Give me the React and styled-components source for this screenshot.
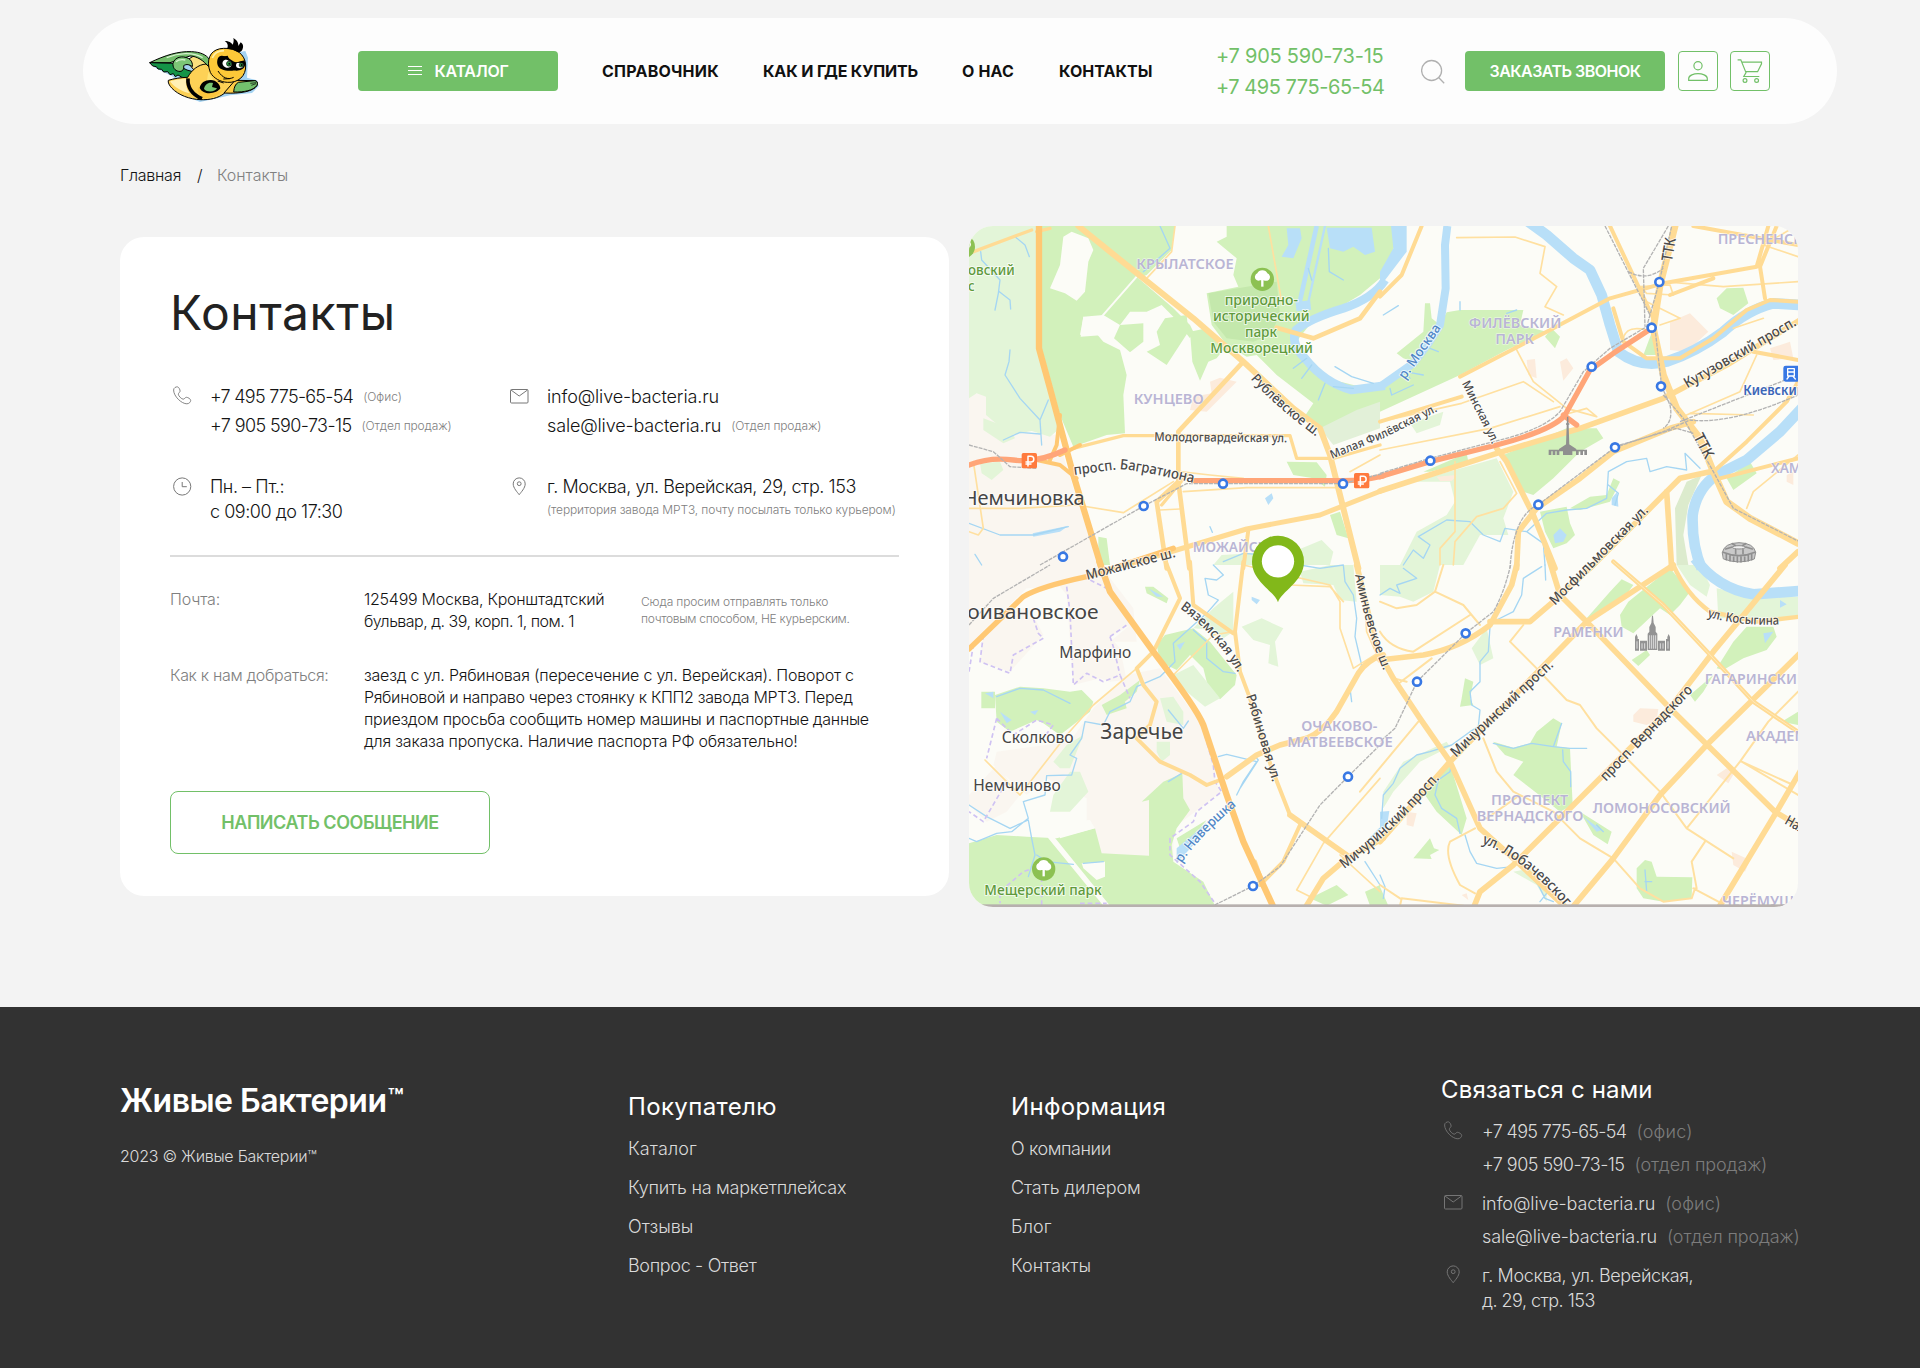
import React from "react";
import styled, { createGlobalStyle } from "styled-components";

const GlobalStyle = createGlobalStyle`
  *, *::before, *::after { box-sizing: border-box; }
  body {
    margin: 0;
    background: #f3f3f3;
    color: #141414;
    font-family: Inter, "Liberation Sans", sans-serif;
    font-size: 16px;
  }
  h1, h2, h3, p, ul { margin: 0; padding: 0; }
  ul { list-style: none; }
  a { color: inherit; text-decoration: none; }
  svg { display: block; }
`;

const GREEN = "#72c068";

const T = styled.span`
  letter-spacing: ${(p) => p.$ls || 0}px;
  white-space: nowrap;
`;

const Page = styled.div`
  width: 1920px;
  height: 1368px;
  overflow: hidden;
  padding-top: 18px;
  display: flex;
  flex-direction: column;
`;

/* ---------- header ---------- */

const Header = styled.header`
  flex: none;
  width: 1754px;
  height: 106px;
  margin-left: 83px;
  padding: 0 0 1px 66px;
  border-radius: 53px;
  background: #fdfdfd;
  display: grid;
  grid-template-columns: 209px 244px 614px 205px 44px 213px 52px 40px;
  align-items: center;
`;

const SolidButton = styled.button`
  width: 200px;
  height: 40px;
  border: 0;
  border-radius: 4px;
  padding: 0;
  background: ${GREEN};
  color: #fff;
  font: 600 16px/24px Inter, sans-serif;
  display: flex;
  align-items: center;
  justify-content: center;
  gap: 13px;
`;

const Nav = styled.nav`
  display: grid;
  grid-template-columns: 161px 199px 97px 1fr;
  font-weight: 650;
  line-height: 24px;
  color: #111;
`;

const Phones = styled.div`
  padding-top: 2px;
  display: flex;
  flex-direction: column;
  font-size: 20px;
  line-height: 31px;
  color: ${GREEN};
`;

const SquareButton = styled.button`
  width: 40px;
  height: 40px;
  padding: 0;
  border: 1px solid ${GREEN};
  border-radius: 4px;
  background: transparent;
  color: ${GREEN};
  display: grid;
  place-items: center;
`;

/* ---------- page body ---------- */

const Crumbs = styled.div`
  flex: none;
  margin: 39px 0 0 120px;
  height: 24px;
  line-height: 24px;
  font-weight: 350;
  display: grid;
  grid-template-columns: 77px 20px auto;
`;

const Muted = styled.span`
  color: ${(p) => p.$c || "#808080"};
  font-size: ${(p) => p.$size || 16}px;
  font-weight: 300;
`;

const Main = styled.main`
  flex: none;
  margin: 39px 0 0 120px;
  display: grid;
  grid-template-columns: 829px 829px;
  column-gap: 20px;
  align-items: center;
`;

const Card = styled.section`
  height: 659px;
  padding: 46px 50px 0;
  border-radius: 24px;
  background: #fff;
  display: flex;
  flex-direction: column;
  font-weight: 360;
`;

const Title = styled.h1`
  font-size: 48px;
  line-height: 60px;
  font-weight: 400;
  color: #222;
`;

const ContactGrid = styled.div`
  margin-top: 39px;
  display: grid;
  grid-template-columns: 337px 1fr;
  row-gap: 34px;
`;

const Contact = styled.div`
  display: grid;
  grid-template-columns: 40px 1fr;
  font-size: 18px;
  line-height: ${(p) => p.$lh || 29}px;
`;

const IconCell = styled.div`
  padding: ${(p) => p.$top || 3}px 0 0 3px;
  color: ${(p) => p.$c || "#777"};
`;

const Line = styled.div`
  display: flex;
  gap: 10px;
  white-space: nowrap;
`;

const NoteLine = styled(Line)`
  line-height: 21px;
`;

const Divider = styled.hr`
  width: 729px;
  height: 2px;
  margin: 31px 0;
  border: 0;
  background: #dcdcdc;
`;

const Detail = styled.div`
  display: grid;
  grid-template-columns: 194px 277px 1fr;
  line-height: 22px;
  & + & { margin-top: 32px; }
`;

const DetailWide = styled(Detail)`
  grid-template-columns: 194px 1fr;
`;

const Stack = styled.div`
  display: flex;
  flex-direction: column;
`;

const SmallNote = styled(Stack)`
  padding-top: 5px;
  font-size: 12px;
  line-height: 17px;
  color: #808080;
  font-weight: 300;
`;

const OutlineButton = styled.button`
  width: 320px;
  height: 63px;
  margin-top: 39px;
  border: 1px solid ${GREEN};
  border-radius: 8px;
  background: transparent;
  color: ${GREEN};
  font: 600 18px/24px Inter, sans-serif;
`;

const MapFrame = styled.div`
  width: 829px;
  height: 681px;
  border-radius: 24px;
  overflow: hidden;
`;

/* ---------- footer ---------- */

const Footer = styled.footer`
  flex: 1;
  margin-top: 100px;
  padding-left: 120px;
  background: #323232;
  color: #dadada;
  display: grid;
  grid-template-columns: 508px 383px 430px 1fr;
  align-items: start;
  font-size: 18px;
  font-weight: 325;
`;

const Brand = styled.div`
  padding-top: 74px;
`;

const BrandName = styled.h2`
  font-size: 32px;
  line-height: 40px;
  font-weight: 600;
  color: #fff;
  display: flex;
`;

const Mark = styled.span`
  margin-left: 1px;
  font-size: 26px;
  line-height: 34px;
`;

const Copyright = styled.p`
  margin-top: 23px;
  font-size: 16px;
  line-height: 24px;
`;

const LinkColumn = styled.div`
  padding-top: 84px;
`;

const Heading = styled.h3`
  font-size: 24px;
  line-height: 32px;
  font-weight: 400;
  color: #fff;
`;

const Links = styled.ul`
  margin-top: 14px;
  display: grid;
  row-gap: 15px;
  line-height: 24px;
`;

const Reach = styled.div`
  padding-top: 67px;
`;

const ReachRow = styled.div`
  display: grid;
  grid-template-columns: 41px 1fr;
  line-height: ${(p) => p.$lh || 33}px;
  margin-top: ${(p) => p.$mt}px;
`;

/* ---------- icons ---------- */

const PhoneIcon = () => (
  <svg width="19" height="19" viewBox="0 0 19 19" fill="none" stroke="currentColor" strokeWidth="0.9">
    <path d="M.6 4C.6 1.8 3 .6 4.6.9 6 1.3 7.1 3.8 7.1 5.1 7.1 6.4 5.3 6.9 5.3 8.2c0 1.700 3.400 5 4.900 5 1.300 0 1.900-1.900 3.200-1.900 1.500 0 4.300 1.700 4.300 3.100 0 1.500-1.600 3.400-3.800 3.400C8.600 17.900.6 10.300.6 4Z" />
  </svg>
);
const MailIcon = () => (
  <svg width="19" height="15" viewBox="0 0 19 15" fill="none" stroke="currentColor">
    <rect x=".5" y=".5" width="17.500" height="13.500" rx="1" />
    <path d="M1 1l8.200 6L17.500 1" />
  </svg>
);
const ClockIcon = () => (
  <svg width="19" height="19" viewBox="0 0 19 19" fill="none" stroke="currentColor">
    <circle cx="9.200" cy="9.500" r="8.600" />
    <path d="M9.200 5v4.700h4.600" />
  </svg>
);
const PinIcon = () => (
  <svg width="19" height="19" viewBox="0 0 19 19" fill="none" stroke="currentColor">
    <path d="M9.200 17.700C7.500 15.400 3.200 11 3.200 6.900a6 6 0 0 1 12 0c0 4.100-4.300 8.500-6 10.800Z" />
    <circle cx="9.200" cy="6.700" r="1.900" />
  </svg>
);
const SearchIcon = () => (
  <svg width="26" height="26" viewBox="0 0 26 26" fill="none" stroke="#b0b0b0" strokeWidth="1.300">
    <circle cx="10.600" cy="12.500" r="10" />
    <path d="M17.600 19.500l5.600 5.700" />
  </svg>
);
const MenuIcon = () => (
  <svg width="14" height="11" viewBox="0 0 14 11" stroke="#fff" strokeWidth="1">
    <path d="M0 1.500h14M0 5.500h14M0 9.500h14" />
  </svg>
);
const UserIcon = () => (
  <svg width="24" height="24" viewBox="0 0 24 24" fill="none" stroke="currentColor" strokeWidth="1.200">
    <circle cx="12" cy="6.800" r="4.100" />
    <path d="M2.700 21.400v-1.900c0-3.200 5.300-4.900 9.300-4.900s9.300 1.700 9.300 4.900v1.900Z" />
  </svg>
);
const CartIcon = () => (
  <svg width="26" height="26" viewBox="0 0 26 26" fill="none" stroke="currentColor" strokeWidth="1.200">
    <path d="M.6 1.800h3.200l5.200 12.800-2.200 3.900h15.500M4.700 4.200h19.800v1.600l-3.900 7.900H8.700" />
    <circle cx="8" cy="22.500" r="1.900" />
    <circle cx="19.600" cy="22.500" r="1.900" />
  </svg>
);

const Logo = () => (
  <svg width="110" height="65" viewBox="207 82 330 195" strokeLinejoin="round" overflow="visible">
    <path fill="#a4d3f2" d="M222 170l60 30-12 15 30 35 60 24 45-10 45-10 66-7 20-20-5-18-30-8 3-60-8-20Z" />
    <path fill="#f9df7c" stroke="#000" strokeWidth="3" d="M318 150l28-17 42 30-30 34Z" />
    <path fill="#73bd6b" stroke="#000" strokeWidth="3" d="M209 156C255 134 295 121 335 123c26 1 44 9 54 24l-3 22c-14-19-36-33-56-33l-60 20Z" />
    <path fill="#149447" stroke="#000" strokeWidth="3" d="M209 156l72 2 40 20 21 6c-2 14-18 19-36 16l-12-7-8 5-6-9-10 3-7-9-12 1-6-8-11-1-5-7-11-2Z" />
    <path fill="#7cc576" stroke="#000" strokeWidth="3" d="M279 158c5-19 28-24 46-15 9 4 14 16 12 25-8-6-17-9-26-3 2 11-4 19-15 17-12-2-18-12-17-24Z" />
    <path fill="none" stroke="#d7f0cf" strokeWidth="4" d="M260 141c35-14 77-18 108 0M288 153c7-6 17-7 28-5" />
    <path fill="#fdd156" stroke="#000" strokeWidth="3" d="M265 209c16-5 40-9 58-9 12-22 31-38 55-40l42 40 45 14-32 34c-19 15-44 20-72 19-32-1-66-14-85-34-8-8-13-18-11-24Z" />
    <path fill="#fff0b5" d="M270 212c15-5 34-8 48-8-2 17 2 33 11 44-24-6-46-18-59-36Z" />
    <path fill="#fcc63f" d="M354 230c20 18 45 20 75 8-10 14-29 23-57 25-14-10-21-20-18-33Z" />
    <path fill="none" stroke="#000" strokeWidth="11" d="M324 203c-2 25 10 47 42 61" />
    <path fill="#fdcb46" stroke="#000" strokeWidth="3" d="M432 247l33-38 60 1c8 1 9 10 5 16-10 15-47 24-98 21Z" />
    <path fill="#73c16d" stroke="#000" strokeWidth="3" d="M461 244c1-14 5-24 14-29l49-5c9 1 10 9 6 15-10 14-37 20-69 19Z" />
    <path fill="none" stroke="#000" strokeWidth="2" d="M511 218l18-2M514 224l14-5" />
    <path fill="#fdc838" stroke="#000" strokeWidth="3" d="M387 172c-7-35 10-58 44-59 38-2 64 18 66 50 2 34-23 54-55 52-20-1-42-12-51-30Z" />
    <path d="M434 91c14 0 20 5 24 11 3-7 4-13 2-20 9 5 16 13 15 24l7-11c8 5 9 14 5 22-3 6-8 9-15 7-9-6-19-8-31-9 5-10 2-18-7-24Z" />
    <path fill="none" stroke="#fff0a8" strokeWidth="5" d="M397 142c5-14 16-22 35-22" />
    <path fill="#ffe477" d="M385 184l18 27 12 24-38-2Z" />
    <path d="M412 160c-2-14 3-26 14-25 22 2 29 19 44 20 8 0 17-7 25-2 3 8-1 18-9 23-10 6-19 3-29 4-17 2-42-2-45-20Z" />
    <ellipse cx="441" cy="159" rx="14" ry="12" fill="#fff" transform="rotate(25 441 159)" />
    <ellipse cx="479" cy="164" rx="11" ry="9" fill="#fff" />
    <circle cx="447" cy="159" r="7.500" fill="#2f9b47" stroke="#000" strokeWidth="2" />
    <circle cx="484" cy="163" r="6.500" fill="#2f9b47" stroke="#000" strokeWidth="2" />
    <circle cx="448" cy="159" r="3" />
    <circle cx="485" cy="163" r="3" />
    <path d="M425 138l26 15-8-18ZM466 156l28-7v8Z" />
    <path fill="none" stroke="#000" strokeWidth="3" d="M414 181c14 22 31 27 47 19M430 205l20-1M413 211l18 6" />
    <path d="M359 232c2-16 18-25 34-24 16 1 27 12 28 25-7 14-49 25-62-1Z" />
    <path fill="#78c471" d="M372 235c2-14 14-22 27-18l-3 12 15 4c-4 9-27 15-39 2Z" />
  </svg>
);

/* ---------- map ---------- */

/* Each sheet is a quarter of the map; shapes are listed in that sheet's own coordinates. */
const SHEETS = { tl: [0, 0], tr: [1260, 0], bl: [0, 1050], br: [1260, 1050] };

const SUBURB = "#faf6f0";
const PARK = "#d2f1bb";
const PALE = "#e3f5d8";
const WATER = "#b8dff8";
const LAND = "#fcfcf7";
const BLOCK = "#fcebdc";

const areas = [
  ["tl", SUBURB, "M27 540L80 530L85 600L180 650L290 660L350 850L420 1050H27Z"],
  ["tl", PALE, "M27 33H237V400L300 640L270 665L215 648L150 660L78 600V545L50 535L27 550Z"],
  ["tl", PARK, "M245 33H645L635 105L560 180L535 190L640 280L690 330L700 350L690 370L640 305L605 270L560 290L510 290L480 330L430 300L370 305L360 360L400 345L430 380L480 405L500 480L490 540L495 655L440 660L340 695L300 600L245 400Z"],
  ["tl", LAND, "M310 65L335 50L385 70L400 105L385 140L375 230L350 257L315 235L270 220L300 150Z"],
  ["tl", LAND, "M370 305L405 312L400 345L432 345L432 360L362 365Z"],
  ["tl", PARK, "M480 330L550 325L550 380L510 412L462 370ZM590 350L615 310L680 300L685 350L620 450L560 410L600 390ZM690 350L740 340L800 390L770 430L745 440L720 497L697 440Z"],
  ["tl", PARK, "M800 33H1260V600L1190 590L1160 620L1080 640L1030 610L1060 565L950 480L890 420L860 425L800 390L755 330L740 235L835 215L820 180L830 130L770 80L800 65Z"],
  ["tl", "#c4e8ac", "M745 235L950 200L960 300L930 360L880 380L800 370L760 320Z"],
  ["tl", LAND, "M1005 385L1060 315L1150 270L1200 240L1260 190V520L1180 510L1100 490L1040 430Z"],
  ["tl", "#e2f0d8", "M1080 640L1190 585L1260 560V640L1120 690Z"],
  ["tl", PARK, "M980 740L1070 742L1100 780L1095 815L1060 790L1000 780ZM1110 900L1140 890L1165 970L1130 960ZM415 965L440 970L450 1050H415Z"],
  ["tl", PALE, "M70 610L150 640L165 670L130 685L70 645ZM60 745L120 740L130 765L95 795L65 775ZM1000 1010L1085 975L1120 1010L1110 1050H1000ZM785 1020L880 1015V1050H760Z"],
  ["tl", BLOCK, "M750 500L780 488L830 500L740 590L690 585L700 545L755 535Z"],
  ["tl", WATER, "M980 40H1020L1025 70L1000 130L965 125L985 90ZM1100 38H1235L1245 110L1215 120L1180 95L1150 110L1110 100ZM915 850L935 835L940 850L925 870ZM218 955L325 932L300 950L220 965Z"],
  ["tr", PARK, "M0 33H35L50 80L0 190ZM240 285H430L420 330L500 350L380 405L240 480L0 590V520L100 440L180 330L200 292ZM50 415L130 350L135 265L150 265L155 310L180 330L100 440L70 430ZM495 365L515 340L540 365L525 400Z"],
  ["tr", PARK, "M370 720L560 640L650 640L670 670L600 710L520 790L460 840L430 830ZM480 890L560 875L570 925L585 960L560 985L520 1000L495 950ZM570 880L630 845L680 840L700 790L720 800L690 860L600 885ZM1010 250L1040 220L1090 218L1105 265L1060 300L1020 280ZM130 770L260 715L265 740L150 770ZM1040 790L1110 740L1130 775L1060 825ZM790 420L820 340L830 420Z"],
  ["tr", PALE, "M100 800L350 730L400 830L370 910L385 960L300 960L250 1050H60L110 950L200 900L225 860L210 800ZM90 625L190 590L180 630L110 655Z"],
  ["tr", "#dcebcd", "M920 800L965 780L925 870L910 960L925 1050H890L885 880Z"],
  ["tr", BLOCK, "M870 320L930 295L985 350L920 410L870 405ZM540 440L560 430L580 460L550 497ZM440 435L465 432L470 490L445 480ZM170 785L230 780L215 798L180 798ZM1170 400L1230 380L1240 430L1180 435ZM1220 780L1240 770V810L1220 800Z"],
  ["tr", WATER, "M33 33H80V110L0 215V170L40 100ZM520 960L540 940L560 960L550 980L525 985ZM695 850L712 830L715 875L695 870Z"],
  ["bl", SUBURB, "M27 0H420L520 130L530 230L450 230L510 180L450 215L480 250L500 345L450 350L420 340L340 360L320 90L300 65L200 70L100 170L60 230L27 240ZM500 330L600 310L720 470L765 600L765 650L785 680L640 790L640 1022H380V700L260 640L200 690L100 600L110 560L330 530L400 430ZM27 690L110 600L180 690L140 740L80 770L27 720ZM210 130L250 210L150 320L60 290L70 210L130 130Z"],
  ["bl", PARK, "M105 390L180 365L250 370L330 380L365 375L400 410L390 440L300 510L250 475L230 465L150 500L110 470ZM64 380H105V430H64ZM27 835L110 810L200 815L290 820L405 790L425 865L567 872V705L545 710L610 650L667 625L670 700L690 735L650 790L635 840L640 890L730 950L765 1022H27Z"],
  ["bl", PARK, "M615 210L700 190L750 230L830 330L825 360L780 403L745 370L730 310L690 270L650 315L600 290L590 240ZM555 65L580 65L625 100L620 115L560 85ZM425 420L480 390L540 345L530 380L495 410L500 430L440 450ZM650 820L740 765L720 790L660 850Z"],
  ["bl", PALE, "M845 185L905 160L970 190L945 230L955 305L925 295L930 240L880 225ZM700 190L760 130L820 80L820 200L790 220L760 195ZM640 330L700 300L780 400L735 425L680 380ZM600 400L640 395L670 440L670 480L620 470ZM280 690L330 620L360 620L385 680L330 740L270 740ZM590 530L630 530L630 570L605 590L590 560ZM1020 20L1110 0H1180L1190 110L1140 105L1120 60L1030 55ZM280 590L320 540L370 510L350 560L330 610L300 610Z"],
  ["bl", LAND, "M205 720L450 1022H430L200 740ZM365 895L435 890V935L410 945L370 910ZM300 770L390 765L405 790L300 820Z"],
  ["bl", WATER, "M875 95L900 105L890 118L875 105ZM650 240L675 230L660 255ZM650 850L710 800L740 770L700 840L650 895ZM120 440L155 465L140 475ZM75 385L100 380V400ZM210 440L235 435L225 450ZM565 70L610 95L590 95Z"],
  ["bl", PARK, "M1215 980L1260 960V1022H1230ZM1050 1000L1130 960L1165 990L1100 1022Z"],
  ["br", PARK, "M400 630L430 590L375 570L340 530L400 548L450 535L570 550L578 720L540 740L490 700ZM450 535L470 500L520 460L545 475L530 545ZM1010 310L1060 230L1100 185L1180 185L1190 215L1160 255L1090 280L1030 315ZM720 150L745 110L870 10L930 80L900 120L870 150L840 130L760 205L725 185ZM620 160L690 80L725 43L760 60L745 80L620 165ZM770 910L795 885L815 890L830 935L937 937L935 1000L850 1010L790 1000L770 970ZM100 880L150 820L162 850L178 855L150 870L155 882ZM135 690L210 590L220 630L260 760L245 810L170 740ZM600 740L695 800L683 838L640 810ZM755 285L800 255L810 270L775 303ZM930 390L1000 330L970 380L945 410ZM245 400L255 340L280 350L270 400L280 420L240 425ZM1205 470L1254 440V480ZM0 965L25 1022H0Z"],
  ["br", PALE, "M1010 70L1130 95L1254 95V160H1015ZM0 0H180L160 80L100 110L60 95L0 90ZM890 0H960L990 60L980 95L930 60ZM275 250L320 190L340 280L300 300ZM10 680L70 590L200 530L210 545L120 590L40 680L10 730ZM400 920L450 910L500 960V1010L470 960Z"],
  ["br", BLOCK, "M760 450L780 430L835 432L830 465L800 480L760 470ZM1010 630L1040 610L1065 620L1045 655ZM1055 860L1110 885L1095 920L1060 900ZM80 740L110 745L100 785L80 780ZM245 990L260 985L265 1005Z"],
  ["br", WATER, "M1150 205L1180 200L1155 235ZM1200 105L1220 118L1200 128ZM610 755L665 795L650 800ZM0 740L28 738L20 790H0Z"],
];

/* [sheet, width, path] */
const rivers = [
  ["tl", 14, "M1070 33L1015 280"], ["tl", 7, "M1095 33L1042 275"], ["tl", 28, "M1008 275L1052 270"],
  ["tl", 26, "M1275 195Q1240 250 1150 280Q1050 310 1008 345Q990 385 1035 430Q1095 505 1175 525L1275 512"],
  ["tr", 24, "M202 33L195 90L197 220L180 330L145 385L100 445L0 515"],
  ["tr", 32, "M445 20L500 60L580 130L630 165L665 240L690 330L715 410Q780 460 860 440Q950 410 1030 350Q1100 285 1180 265L1260 270"],
  ["tr", 32, "M1270 575L1200 650L1100 735L1010 780Q950 820 938 900Q935 990 965 1060"],
  ["br", 32, "M945 -20Q1010 70 1120 88L1260 78"],
];

const streams = [
  ["tl", "M165 65L195 90L208 125M62 110L65 135L120 195L115 235L105 285M118 230L150 255L152 282M150 405L147 440L135 480L180 550L240 615L265 555M240 615L245 690M130 675L180 652L240 657M600 33L630 100L590 135L550 170M1105 100L1108 170L1150 195M1045 160L1055 195M1000 460L1040 430M1025 490L1055 450M1075 555L1095 505M1120 515L1180 520M1125 455L1175 485L1240 505M27 925L120 960L220 960L325 935M750 935L757 952M45 1018L65 1050M790 1040L850 1015L920 1020"],
  ["tr", "M10 300L55 272M30 520L35 540L100 510M90 490L75 470L130 480M150 400L175 410M240 285L240 260M380 295L410 285M70 1050L100 1005L130 1030L150 990L115 965L200 915L270 920L310 960L360 980L375 940L440 950L500 895L560 885L620 880L680 850L685 770L740 740L800 730L810 770L860 755L920 765L915 715L960 760M685 810L715 835L705 870M440 950L490 985L495 1050"],
  ["bl", "M760 0L790 30L770 45L735 40L745 90L775 105L740 145L690 190L640 235L645 290L600 335L530 365L510 410L450 440L430 480L375 470L365 520L330 570L350 580L335 630L260 632L255 690L190 710L205 760L155 800L110 805L50 830L27 820M27 720L80 755L150 790L205 765L215 820L225 870L205 935M230 870L260 890L340 898M370 895L430 890M110 395L180 370L250 375L330 415M700 195L740 230L740 280L790 320L825 325M1020 0L1080 10L1150 0L1155 50L1180 90L1190 160L1185 215L1205 300L1170 370L1175 410M775 575L800 568L890 590L850 650L830 690M890 580L895 585L840 670M625 650L665 625M1260 790L1220 830M625 435L670 490L685 468M1215 890L1260 960"],
  ["br", "M0 90L30 70L60 85L50 60L110 40L70 10M495 0L497 45M485 5L430 40L425 90L400 140L350 165L330 185L325 260L300 290L300 350L270 380L275 420L300 435L295 485L270 500L215 540L150 560L110 570L60 610L40 655L10 690L5 760M340 535L400 550L455 535L520 545L545 475M520 545L570 550L620 550M548 555L550 590L572 620L572 665M215 590L210 620L175 645L165 690L185 730L230 760L240 805M255 810L270 860L290 895L350 910L400 905M450 930L475 960L495 1000L520 1010M0 930L15 965L10 1000M795 915L800 980M795 950L815 950M650 780L670 800M500 985L480 1010"],
];

const MINOR = "#ffe0a0";
const MAJOR = "#ffdb94";
const BELT = "#ffc873";
const TOLL = "#ffa578";

/* [sheet, colour, width, path] */
const roads = [
  ["tl", MINOR, 5, "M27 880L180 880L350 870L490 893L560 850L640 800M645 33L635 110L560 190M925 33L965 260M40 740L70 940L55 960L27 950M600 885L660 882M670 830L860 818L1140 818M660 770L750 780L850 790M1170 770L1260 720"],
  ["tr", MINOR, 5, "M230 68L405 66L495 95L480 175L530 215L495 275L550 300M405 395L460 500L560 580L650 605M0 620L245 565L430 500L520 560M0 705L330 640L540 575M225 740V950L180 1000V1050M220 1050L225 980L290 905L370 880L410 835M360 740L410 835M550 600L620 580L650 605M1254 30L1150 90L1254 125M850 200L1030 215L1254 200M1120 600L930 595M1130 420L1080 530L920 600M1100 880L1120 830L1254 720M780 215L870 210L880 240L800 235ZM730 370Q740 330 800 345M1150 310L1060 340M800 260L900 310L840 330"],
  ["bl", MINOR, 5, "M530 310L400 420L320 510L180 690L75 585M850 0L1110 60L1140 110L1140 190L1180 310L1260 260M640 330L760 210L820 200M1090 835L1260 640M1090 835L1010 975L1060 1000M1140 870L1260 980M990 60L1110 65L1150 110M1215 130L1220 200L1260 290"],
  ["br", MINOR, 6, "M430 180L390 230L470 310L560 405L600 420L650 490L720 560L840 680L920 790L1060 880M310 520L350 620L400 680L520 740L600 820L700 880L780 970L850 1010L935 1000L945 970M0 110L50 130L110 120L165 80L190 0M165 80L250 120L300 180M0 200Q30 250 100 260L270 150M50 360L155 280M-60 680L115 470M285 790L210 830Q190 870 240 960L285 985M60 1000L0 960M60 1022L65 1000L250 1022M940 970L1015 1010M975 830L935 890L950 970M1085 590L1240 660M1165 470L1080 590L920 790M1254 380L1165 470M1085 590L1254 690M40 340L80 350M320 760L420 690"],
  ["tl", MAJOR, 10, "M27 115L215 45M340 700L490 662H990L1010 730L1120 730L1260 690M605 870L680 780M230 50L270 40"],
  ["tl", MAJOR, 14, "M950 338L1060 370L1200 310L1260 230M850 440L655 650V800M655 800L590 860L620 1060M655 800L688 1060"],
  ["tl", MAJOR, 12, "M865 945L850 1060"],
  ["tl", MAJOR, 18, "M355 33L450 110L700 310L850 440L1000 580L1080 640L1110 720L1150 880L1195 1060"],
  ["tl", MAJOR, 15, "M500 1050L650 1005L860 942L1080 900L1270 825"],
  ["tr", MAJOR, 12, "M0 245L65 180L125 33M0 620L245 545M240 485L500 350L690 250L850 205L1130 155L1165 33M1190 33L1140 155L1155 250M870 240L1000 190M700 280L730 380L800 430L900 430L1000 370L1100 285L1170 255L1254 260M690 33L820 310M1000 770L1100 680L1220 560L1254 500M1120 410L1254 435M1020 790L1254 730M940 33L1254 90"],
  ["tr", MAJOR, 17, "M0 828L350 715L600 640L850 550L1040 450L1260 315M350 700L380 740L460 900L525 1060M870 640L700 710L600 790L470 880L415 950L410 1060M990 770L900 790L800 890L630 1060M860 830L875 1060M1254 1010L1200 1060M870 640L940 620"],
  ["tr", MAJOR, 21, "M885 33L840 210L820 340L850 480L890 580L960 670L1000 770L1040 860L1110 910L1254 985"],
  ["bl", MAJOR, 12, "M617 -10L660 100L580 260L530 310L550 360L590 410L570 480L530 520L600 590L690 630L740 660L780 645M690 -10L700 120L820 205M850 -10L825 200L840 320L870 400L935 610L990 750L1160 870M1020 780L970 890L900 960M885 890L910 960"],
  ["bl", MAJOR, 17, "M1270 270Q1220 285 1195 325L1130 440Q1090 500 1040 520L960 540L890 570L800 635M1035 1030L1090 940L1160 880L1270 820M990 750L1160 870"],
  ["br", MAJOR, 17, "M-70 0L-10 250L40 340L120 460L210 590L300 790L400 880L560 1030M410 0L395 60L330 180Q240 250 130 270L0 285M640 0L520 110L450 170L330 170M500 -40L540 90L620 170L870 430L1185 740L1260 785M0 830L210 590L620 170L880 0M280 1030L300 980L400 900L560 740L870 430L1000 260L1215 0M575 1030L700 880L840 690L980 540L1260 265M1015 1030L1190 740L1260 620"],
  ["br", MAJOR, 13, "M880 0Q920 90 990 140L1130 170L1260 155M700 -10L850 120L1000 280L1120 410L1260 505"],
  ["br", "#fff0cc", 2, "M700 -10L850 120L1000 280L1120 410L1260 505"],
  ["tl", BELT, 19, "M237 33V400L270 520L340 780L425 1060"],
  ["tl", BELT, 12, "M300 600L290 690L270 735M350 790L300 750L230 735M360 690L300 720"],
  ["bl", BELT, 19, "M418 -10L450 80L580 260Q710 430 730 480Q770 600 800 690L850 830L942 1030"],
  ["bl", BELT, 16, "M27 252L190 95Q240 65 380 35L640 -50"],
  ["tl", TOLL, 16, "M27 750Q90 725 160 735T315 705M700 797H1150Q1210 797 1270 783"],
  ["tr", TOLL, 16, "M0 785L150 740L350 690Q520 645 555 600L630 465L700 415L815 340M550 600L590 630"],
];

const rails = [
  ["tl", "M240 1050L551 873L680 806H1150L1270 775M27 690L100 710L150 755L230 760"],
  ["tr", "M0 775L150 730L340 680Q490 645 540 590L610 470L690 400L800 335L838 201L875 33M475 869L705 697L850 650L930 615Q1050 630 1254 540M720 690L890 640L940 655M845 514L825 340M845 514L870 570Q880 620 850 640M850 540L910 610L1000 770L1060 880L1254 978M475 869Q400 900 390 1060M675 33L810 300M865 33L790 160L795 335M745 170Q800 200 850 160M900 620L1254 480"],
  ["bl", "M27 180L100 100L270 0M1270 530L1164 635L1080 720L960 905L879 963L760 1022"],
  ["br", "M392 0Q370 90 340 140L257 205L111 350L45 490L0 530"],
];

const borders = [
  ["bl", "M70 210L60 290L150 325L160 270L250 220L235 205L210 130M320 65L330 140L340 360L380 325L430 350L480 330L510 400M450 215L500 180M450 215L460 245L480 330M110 460L80 580M140 650L70 770L27 740M110 460L160 510L230 465L280 480L250 520M640 330L720 460L760 600L765 650L785 680L710 740L700 770L630 820V870L720 950L765 1015M245 1020V900L190 920L120 980V1015M360 1015H440M27 320L40 240M370 35L440 70"],
];

const stations = [
  ["tl", 789, 806], ["tl", 1149, 806], ["tl", 551, 873], ["tl", 309, 1025],
  ["tr", 838, 201], ["tr", 815, 338], ["tr", 635, 455], ["tr", 843, 514], ["tr", 151, 737], ["tr", 705, 697], ["tr", 475, 869],
  ["bl", 1164, 635], ["bl", 879, 963], ["br", 257, 205], ["br", 111, 350],
];

/* [sheet, x, baseline, size, length, kind, text] */
const places = [
  ["tl", 529, 163, 43, 292, "district", "КРЫЛАТСКОЕ"],
  ["tl", 521, 566, 43, 210, "district", "КУНЦЕВО"],
  ["tl", 698, 1011, 43, 222, "district", "МОЖАЙСК"],
  ["tr", 266, 339, 43, 278, "district", "ФИЛЁВСКИЙ"],
  ["tr", 346, 387, 43, 116, "district", "ПАРК"],
  ["tr", 1013, 87, 43, 255, "district", "ПРЕСНЕНСК"],
  ["tr", 1173, 773, 43, 150, "district", "ХАМОВ"],
  ["bl", 1024, 498, 43, 228, "district", "ОЧАКОВО-"],
  ["bl", 982, 545, 43, 316, "district", "МАТВЕЕВСКОЕ"],
  ["br", 520, 215, 43, 211, "district", "РАМЕНКИ"],
  ["br", 974, 356, 43, 310, "district", "ГАГАРИНСКИЙ"],
  ["br", 1098, 529, 43, 220, "district", "АКАДЕМИ"],
  ["br", 333, 720, 43, 232, "district", "ПРОСПЕКТ"],
  ["br", 290, 768, 43, 320, "district", "ВЕРНАДСКОГО"],
  ["br", 638, 744, 43, 414, "district", "ЛОМОНОСОВСКИЙ"],
  ["br", 1026, 1024, 43, 245, "district", "ЧЕРЁМУШК"],
  ["tl", 794, 269, 42, 220, "park", "природно-"],
  ["tl", 759, 317, 42, 290, "park", "исторический"],
  ["tl", 855, 365, 42, 96, "park", "парк"],
  ["tl", 751, 413, 42, 308, "park", "Москворецкий"],
  ["tl", 24, 179, 42, 140, "park", "овский"],
  ["tl", 24, 227, 42, 20, "park", "с"],
  ["bl", 73, 991, 42, 352, "park", "Мещерский парк"],
  ["tl", 8, 871, 62, 366, "town", "Немчиновка"],
  ["bl", 22, 161, 62, 394, "town", "оивановское"],
  ["bl", 421, 521, 64, 249, "town", "Заречье"],
  ["bl", 298, 278, 48, 216, "town", "Марфино"],
  ["bl", 125, 534, 48, 216, "town", "Сколково"],
  ["bl", 40, 679, 48, 262, "town", "Немчиново"],
  ["tr", 1090, 541, 44, 185, "station", "Киевский"],
];

/* [sheet, path, size, length, kind, text] */
const streets = [
  ["tl", "M583 678L985 682", 37, 398, "street", "Молодогвардейская ул."],
  ["tl", "M343 780L480 762Q560 770 705 805", 43, 362, "street", "просп. Багратиона"],
  ["tl", "M872 492Q940 570 1078 672", 40, 262, "street", "Рублёвское ш."],
  ["tl", "M1116 732L1270 670L1440 585", 36, 348, "street", "Малая Филёвская ул."],
  ["tl", "M382 1095L650 1025", 42, 275, "street", "Можайское ш."],
  ["tr", "M245 505Q290 590 335 685", 36, 205, "street", "Минская ул."],
  ["tr", "M922 520L1260 325", 43, 380, "street", "Кутузовский просп."],
  ["tr", "M876 140L888 70", 46, 70, "street", "ТТК"],
  ["tr", "M940 665L978 738", 46, 78, "street", "ТТК"],
  ["tr", "M75 495L190 330", 40, 190, "river", "р. Москва"],
  ["tr", "M525 1172L810 885", 41, 400, "street", "Мосфильмовская ул."],
  ["bl", "M660 130Q760 200 835 325", 40, 262, "street", "Вяземская ул."],
  ["bl", "M858 392L940 660", 40, 272, "street", "Рябиновая ул."],
  ["bl", "M1185 30Q1220 200 1272 320", 38, 300, "street", "Аминьевское ш."],
  ["bl", "M665 895Q720 810 850 705", 40, 240, "river", "р. Навершка"],
  ["bl", "M1153 912Q1290 810 1440 640", 43, 395, "street", "Мичуринский просп."],
  ["br", "M228 578L525 300", 43, 403, "street", "Мичуринский просп."],
  ["br", "M678 650L942 375", 43, 378, "street", "просп. Вернадского"],
  ["br", "M982 155Q1080 185 1202 178", 38, 218, "street", "ул. Косыгина"],
  ["br", "M305 835Q430 880 555 1025", 43, 318, "street", "ул. Лобачевског"],
  ["br", "M1212 775L1270 808", 42, 62, "street", "Нах"],
];

const MapSvg = styled.svg`
  font-family: "Noto Sans", "Open Sans", sans-serif;
  stroke-linecap: round;
  stroke-linejoin: round;
`;

const KIND = {
  district: ["#b9b5d4", 600],
  park: ["#5f9a3c", 500],
  town: ["#454545", 400],
  station: ["#3a66b8", 600],
  street: ["#4a4a4a", 500],
  river: ["#4f86c6", 500],
};

const Label = styled.text`
  fill: ${(p) => KIND[p.$kind][0]};
  font-weight: ${(p) => KIND[p.$kind][1]};
  font-size: ${(p) => p.$size}px;
  stroke: #fff;
  stroke-opacity: 0.7;
  stroke-width: ${(p) => (p.$kind === "district" ? 3 : 6)}px;
  paint-order: stroke;
`;

const shift = (q) => `translate(${SHEETS[q][0]} ${SHEETS[q][1]})`;

const Tree = ({ x, y }) => (
  <g transform={`translate(${x} ${y})`}>
    <circle r="35" fill="#8cc152" />
    <path d="M-20 0a12 12 0 0 1 5-18a16 14 0 0 1 30 0a12 12 0 0 1 5 19q-8 6-16 2h-10q-9 3-14-3Z" fill="#fff" />
    <path d="M0 0V22" stroke="#fff" strokeWidth="7" strokeLinecap="butt" />
  </g>
);

const TollSign = ({ x, y }) => (
  <g transform={`translate(${x} ${y})`}>
    <rect x="-23" y="-23" width="46" height="46" rx="5" fill="#ff7a3d" />
    <path d="M-4 16V-13H5a8 8 0 0 1 0 17H-10M-10 10H5" fill="none" stroke="#fff" strokeWidth="4.500" />
  </g>
);

const CityMap = () => (
  <MapSvg width="829" height="681" viewBox="27 33 2487 2043">
    <rect x="27" y="33" width="2487" height="2043" fill={LAND} />
    {areas.map(([q, c, d], i) => <path key={i} transform={shift(q)} fill={c} d={d} />)}
    {rivers.map(([q, w, d], i) => <path key={i} transform={shift(q)} fill="none" stroke={WATER} strokeWidth={w} strokeLinecap="butt" d={d} />)}
    {streams.map(([q, d], i) => <path key={i} transform={shift(q)} fill="none" stroke="#a5d6f3" strokeWidth="4" d={d} />)}
    {borders.map(([q, d], i) => <path key={i} transform={shift(q)} fill="none" stroke="#cfc2f2" strokeWidth="5" strokeDasharray="14 9" strokeLinecap="butt" d={d} />)}
    <path d="M425 305L530 185" stroke={LAND} strokeWidth="6" />
    {roads.map(([q, c, w, d], i) => (
      <path key={i} transform={shift(q)} fill="none" d={d} stroke={c} strokeWidth={w} />
    ))}
    {rails.map(([q, d], i) => (
      <path key={i} transform={shift(q)} fill="none" strokeLinecap="butt" d={d} stroke="#b3b3b3" strokeWidth="4" strokeDasharray="12 3" />
    ))}
    {stations.map(([q, x, y], i) => (
      <circle key={i} transform={shift(q)} cx={x} cy={y} r="12" fill="#fff" stroke="#3878e4" strokeWidth="8" />
    ))}
    <TollSign x="208" y="737" />
    <TollSign x="1205" y="797" />
    <Tree x="907" y="193" />
    <Tree x="251" y="1962" />
    <Tree x="10" y="95" />

    <g transform="translate(1823 605)" fill="#8f8f8f">
      <path d="M-2 0H2L5 85H-5ZM-5 20H5V24H-5ZM-57 99H58V104H-57ZM-57 104H-49V115H-57ZM-45 104H-37V115H-45ZM-33 104H-25V115H-33ZM25 104H33V115H25ZM38 104H46V115H38ZM50 104H58V115H50ZM-26 97L0 80L26 97V100H-26ZM-14 100H14V115H-14Z" />
    </g>
    <g transform="translate(2337 1012)" fill="none" stroke="#8f8f8f" strokeWidth="5">
      <path d="M-50 0Q-44 -28 0 -29Q44 -28 50 0L46 20Q0 38 -46 20Z" fill="#c9c9c9" strokeWidth="3" />
      <path d="M-48 0Q0 20 48 0M-38 4V22M-27 7V25M-16 9V27M-5 10V29M6 10V29M17 9V27M28 7V25M38 4V22" />
      <path d="M-40 -10L-20 -16M40 -10L20 -16M-20 -26L-10 -20M20 -26L10 -20M-10 -8V4M12 -8V4" />
      <ellipse cx="0" cy="-15" rx="20" ry="5" fill="#eee" strokeWidth="3" />
    </g>
    <g transform="translate(2078 1202)" fill="#939393">
      <path d="M-2 0H1L3 22L9 34V48L14 54V103H-15V54L-10 48V34L-4 22ZM-53 64L-49 55L-45 64V70H-41V105H-53ZM44 64L48 55L52 64V105H40V70H44ZM-38 75H-17V105H-38ZM16 75H37V105H16Z" />
      <path d="M-9 60V98M-3 60V98M3 60V98M9 60V98M-32 84V98M-24 84V98M23 84V98M31 84V98M-47 78V98M46 78V98" stroke="#eee" strokeWidth="2.500" />
    </g>
    <g transform="translate(2470 452)">
      <rect width="48" height="48" rx="7" fill="#3878e4" />
      <path d="M13 9H33V31H13ZM14 19H32M17 32L11 40M29 32L36 40" stroke="#fff" strokeWidth="4" fill="none" />
    </g>

    {places.map(([q, x, y, size, len, kind, text], i) => (
      <Label key={i} transform={shift(q)} x={x} y={y} $size={size} $kind={kind} textLength={len} lengthAdjust="spacingAndGlyphs">{text}</Label>
    ))}
    {streets.map(([q, d, size, len, kind, text], i) => (
      <g key={i} transform={shift(q)}>
        <path id={`street-${i}`} d={d} fill="none" />
        <Label $size={size} $kind={kind}>
          <textPath href={`#street-${i}`} textLength={len} lengthAdjust="spacingAndGlyphs">{text}</textPath>
        </Label>
      </g>
    ))}

    <path fill="#82b81a" d="M954 1162C946 1130 876 1100 876 1040A78 78 0 1 1 1032 1040C1032 1100 962 1130 954 1162Z" />
    <circle cx="954" cy="1039" r="48.500" fill="#fff" />
    <rect x="27" y="2068" width="2487" height="8" fill="#b7b0ae" />
  </MapSvg>
);

/* ---------- page ---------- */

export default function App() {
  return (
    <Page>
      <GlobalStyle />
      <Header>
        <Logo />
        <SolidButton><MenuIcon /><T $ls={-0.3}>КАТАЛОГ</T></SolidButton>
        <Nav>
          <a><T $ls={0.22}>СПРАВОЧНИК</T></a>
          <a><T $ls={-0.14}>КАК И ГДЕ КУПИТЬ</T></a>
          <a><T $ls={0.16}>О НАС</T></a>
          <a><T $ls={0.02}>КОНТАКТЫ</T></a>
        </Nav>
        <Phones>
          <T $ls={-0.24}>+7 905 590-73-15</T>
          <T $ls={-0.46}>+7 495 775-65-54</T>
        </Phones>
        <SearchIcon />
        <SolidButton><T $ls={-0.53}>ЗАКАЗАТЬ ЗВОНОК</T></SolidButton>
        <SquareButton><UserIcon /></SquareButton>
        <SquareButton><CartIcon /></SquareButton>
      </Header>

      <Crumbs>
        <T $ls={-0.26}>Главная</T>
        <span>/</span>
        <Muted><T $ls={-0.03}>Контакты</T></Muted>
      </Crumbs>

      <Main>
        <Card>
          <Title><T $ls={0.55}>Контакты</T></Title>
          <ContactGrid>
            <Contact>
              <IconCell $top={4}><PhoneIcon /></IconCell>
              <Stack>
                <Line><T $ls={-0.75}>+7 495 775-65-54</T><Muted $size={12}><T $ls={-0.05}>(Офис)</T></Muted></Line>
                <Line><T $ls={-0.6}>+7 905 590-73-15</T><Muted $size={12}><T $ls={-0.14}>(Отдел продаж)</T></Muted></Line>
              </Stack>
            </Contact>
            <Contact>
              <IconCell $top={7}><MailIcon /></IconCell>
              <Stack>
                <Line><T $ls={-0.14}>info@live-bacteria.ru</T></Line>
                <Line><T $ls={-0.15}>sale@live-bacteria.ru</T><Muted $size={12}><T $ls={-0.14}>(Отдел продаж)</T></Muted></Line>
              </Stack>
            </Contact>
            <Contact $lh={25}>
              <IconCell><ClockIcon /></IconCell>
              <Stack>
                <Line><T $ls={-0.47}>Пн. – Пт.:</T></Line>
                <Line><T $ls={-0.46}>с 09:00 до 17:30</T></Line>
              </Stack>
            </Contact>
            <Contact $lh={25}>
              <IconCell><PinIcon /></IconCell>
              <Stack>
                <Line><T $ls={-0.43}>г. Москва, ул. Верейская, 29, стр. 153</T></Line>
                <NoteLine><Muted $size={12}><T $ls={-0.12}>(территория завода МРТЗ, почту посылать только курьером)</T></Muted></NoteLine>
              </Stack>
            </Contact>
          </ContactGrid>
          <Divider />
          <Detail>
            <Muted><T $ls={-0.16}>Почта:</T></Muted>
            <Stack>
              <T $ls={-0.26}>125499 Москва, Кронштадтский</T>
              <T $ls={-0.5}>бульвар, д. 39, корп. 1, пом. 1</T>
            </Stack>
            <SmallNote>
              <T $ls={-0.14}>Сюда просим отправлять только</T>
              <T $ls={-0.3}>почтовым способом, НЕ курьерским.</T>
            </SmallNote>
          </Detail>
          <DetailWide>
            <Muted><T $ls={-0.33}>Как к нам добраться:</T></Muted>
            <Stack>
              <T $ls={-0.22}>заезд с ул. Рябиновая (пересечение с ул. Верейская). Поворот с</T>
              <T $ls={-0.33}>Рябиновой и направо через стоянку к КПП2 завода МРТЗ. Перед</T>
              <T $ls={-0.29}>приездом просьба сообщить номер машины и паспортные данные</T>
              <T $ls={-0.2}>для заказа пропуска. Наличие паспорта РФ обязательно!</T>
            </Stack>
          </DetailWide>
          <OutlineButton><T $ls={-0.46}>НАПИСАТЬ СООБЩЕНИЕ</T></OutlineButton>
        </Card>
        <MapFrame><CityMap /></MapFrame>
      </Main>

      <Footer>
        <Brand>
          <BrandName><T $ls={-0.5}>Живые Бактерии</T><Mark>™</Mark></BrandName>
          <Copyright><T $ls={-0.26}>2023 © Живые Бактерии™</T></Copyright>
        </Brand>
        <LinkColumn>
          <Heading><T $ls={0.38}>Покупателю</T></Heading>
          <Links>
            <li><T $ls={0.08}>Каталог</T></li>
            <li><T $ls={-0.25}>Купить на маркетплейсах</T></li>
            <li><T $ls={0.02}>Отзывы</T></li>
            <li><T $ls={-0.34}>Вопрос - Ответ</T></li>
          </Links>
        </LinkColumn>
        <LinkColumn>
          <Heading><T $ls={0.34}>Информация</T></Heading>
          <Links>
            <li><T $ls={-0.42}>О компании</T></li>
            <li><T $ls={-0.14}>Стать дилером</T></li>
            <li><T $ls={0.14}>Блог</T></li>
            <li><T $ls={-0.03}>Контакты</T></li>
          </Links>
        </LinkColumn>
        <Reach>
          <Heading><T $ls={0.15}>Связаться с нами</T></Heading>
          <ReachRow $mt={9}>
            <IconCell $top={6} $c="#757575"><PhoneIcon /></IconCell>
            <Stack>
              <Line><T $ls={-0.67}>+7 495 775-65-54</T><Muted $size={18} $c="#7c7c7c"><T $ls={0.2}>(офис)</T></Muted></Line>
              <Line><T $ls={-0.54}>+7 905 590-73-15</T><Muted $size={18} $c="#7c7c7c"><T $ls={-0.14}>(отдел продаж)</T></Muted></Line>
            </Stack>
          </ReachRow>
          <ReachRow $mt={6}>
            <IconCell $top={8} $c="#757575"><MailIcon /></IconCell>
            <Stack>
              <Line><T $ls={-0.08}>info@live-bacteria.ru</T><Muted $size={18} $c="#7c7c7c"><T $ls={0.12}>(офис)</T></Muted></Line>
              <Line><T $ls={-0.12}>sale@live-bacteria.ru</T><Muted $size={18} $c="#7c7c7c"><T $ls={-0.14}>(отдел продаж)</T></Muted></Line>
            </Stack>
          </ReachRow>
          <ReachRow $mt={10} $lh={25}>
            <IconCell $top={2} $c="#757575"><PinIcon /></IconCell>
            <Stack>
              <T $ls={-0.38}>г. Москва, ул. Верейская,</T>
              <T $ls={-0.52}>д. 29, стр. 153</T>
            </Stack>
          </ReachRow>
        </Reach>
      </Footer>
    </Page>
  );
}
